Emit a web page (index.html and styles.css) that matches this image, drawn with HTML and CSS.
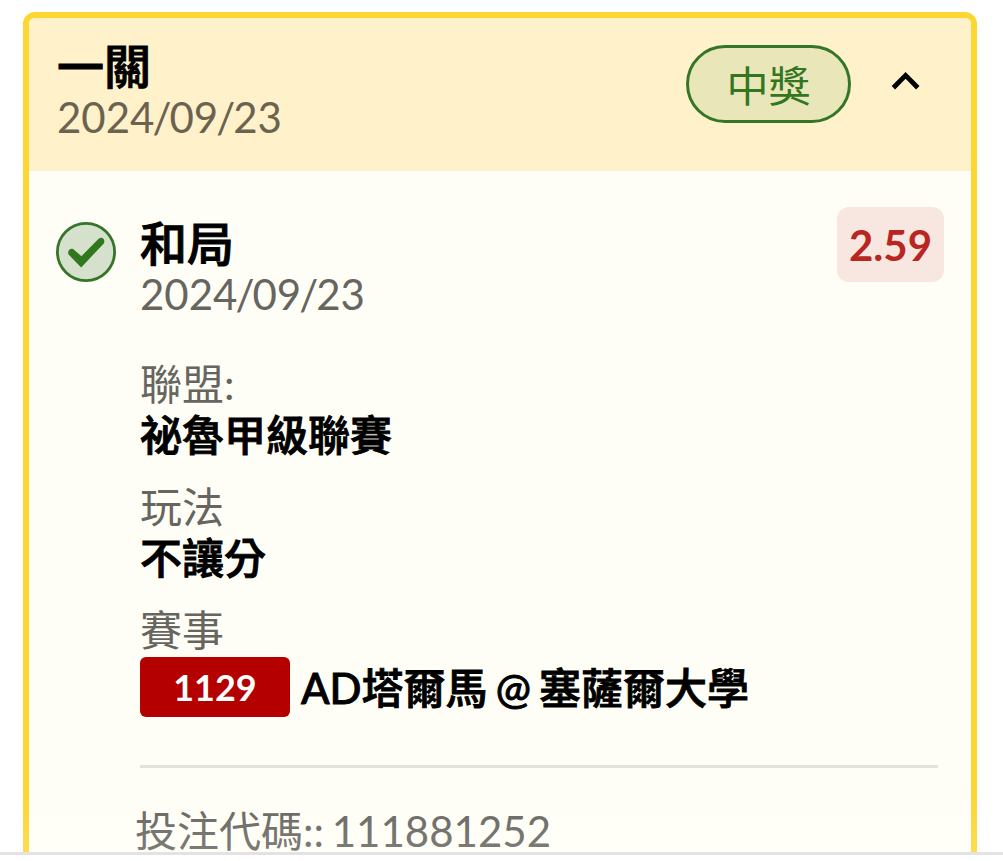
FILE: index.html
```html
<!DOCTYPE html>
<html lang="zh-Hant">
<head>
  <meta charset="UTF-8">
  <title>投注紀錄</title>
  <link rel="stylesheet" href="styles.css">
</head>
<body>

<div class="screen">
  <div class="ticket">
    <div class="ticket-header">
      <div class="heading">
        <h1>一關</h1>
        <div class="date">2024<span class="slash">/</span>09<span class="slash">/</span>23</div>
      </div>
      <span class="status">中獎</span>
      <svg class="arrow" width="30" height="22" viewBox="0 0 30 22">
        <path d="M2.4 17.8 L14.6 5.4 L26.8 17.8" fill="none" stroke="#000" stroke-width="4.8"/>
      </svg>
    </div>

    <div class="bet">
      <svg class="check" width="60" height="60" viewBox="0 0 60 60">
        <circle cx="30" cy="30" r="28.6" fill="#d6e1cd" stroke="#347527" stroke-width="2.8"/>
        <path d="M12.8 32.8 C10.6 29.6 14 25.4 17.4 27.2 L25.4 34.2 L42.6 16.8 C46 14.2 49.8 17.4 47.8 21.4 L25.2 45.4 Z" fill="#31771d"/>
      </svg>
      <div class="bet-main">
        <div class="bet-top">
          <div class="heading">
            <h2>和局</h2>
            <div class="date">2024<span class="slash">/</span>09<span class="slash">/</span>23</div>
          </div>
          <span class="odds">2.59</span>
        </div>

        <div class="info">
          <div class="label">聯盟:</div>
          <div class="value">祕魯甲級聯賽</div>
        </div>
        <div class="info">
          <div class="label">玩法</div>
          <div class="value">不讓分</div>
        </div>
        <div class="info">
          <div class="label">賽事</div>
          <div class="match">
            <span class="match-no">1129</span>
            <span class="value">AD塔爾馬 @ 塞薩爾大學</span>
          </div>
        </div>

        <div class="bet-code">投注代碼:: 111881252</div>
      </div>
    </div>
  </div>
</div>

</body>
</html>
```

FILE: styles.css
```css
* {
  box-sizing: border-box;
}
body {
  margin: 0;
  background: #fff;
  color: #000;
  font-family: Lato, "Noto Sans CJK TC", sans-serif;
  font-size: 42px;
  height: 861px;
  overflow: hidden;
}
h1, h2 {
  margin: 0;
  font-size: 47px;
  font-weight: 500;
  line-height: 53px;
  -webkit-text-stroke: 1px #000;
}
.screen {
  position: relative;
  height: 855px;
  padding: 12px 26px 0 23px;
  border-bottom: 3px solid #e3e3e3;
  overflow: hidden;
}
/* fade above the bottom bar */
.screen::after {
  content: "";
  position: absolute;
  left: 0;
  right: 0;
  bottom: 0;
  height: 60px;
  background: linear-gradient(rgba(255,255,255,0), rgba(255,255,255,0.15));
}
.ticket {
  height: 900px;
  border: 6px solid #fdd631;
  border-radius: 12px;
  background: #fffef6;
  overflow: hidden;
}
.ticket-header {
  display: flex;
  align-items: flex-start;
  height: 153px;
  padding: 22px 50px 0 28px;
  background: #fff2cb;
}
.heading {
  flex: 1;
}
.date {
  line-height: 48px;
  color: #666560;
}
.slash {
  margin: 0 -2px;
}
.ticket-header .date {
  color: #6b6350;
}
.status {
  width: 165px;
  height: 78px;
  margin-top: 5px;
  border: 3px solid #347527;
  border-radius: 39px;
  background: #e9e7b9;
  color: #34761f;
  line-height: 76px;
  text-align: center;
}
.arrow {
  margin: 30px 0 0 40px;
}
.bet {
  display: flex;
  align-items: flex-start;
  padding: 36px 27px 0;
}
.check {
  flex: none;
  margin: 15px 24px 0 0;
}
.bet-main {
  flex: 1;
}
.bet-top {
  display: flex;
  align-items: flex-start;
  padding-bottom: 41px;
}
.bet-top .heading {
  padding-top: 10px;
}
.odds {
  width: 107px;
  height: 75px;
  border-radius: 12px;
  background: #f8e7e0;
  color: #b92520;
  font-weight: 700;
  line-height: 77px;
  text-align: center;
}
.info {
  margin-bottom: 21px;
}
.label {
  line-height: 51px;
  color: #666560;
}
.value {
  font-weight: 500;
  line-height: 51px;
  word-spacing: -2.5px;
  -webkit-text-stroke: 0.9px #000;
}
.match {
  display: flex;
  align-items: center;
  height: 60px;
  margin-top: 1px;
}
.match .value {
  padding-top: 3px;
}
.match-no {
  width: 150px;
  height: 60px;
  margin-right: 11px;
  border-radius: 6px;
  background: #b50000;
  color: #fff;
  font-size: 36px;
  font-weight: 700;
  line-height: 61px;
  text-align: center;
}
.bet-code {
  margin: 48px 6px 0 0;
  padding-top: 38px;
  border-top: 3px solid #e4e2da;
  color: #666560;
  line-height: 51px;
  text-indent: -5px;
  word-spacing: -3px;
}
```
